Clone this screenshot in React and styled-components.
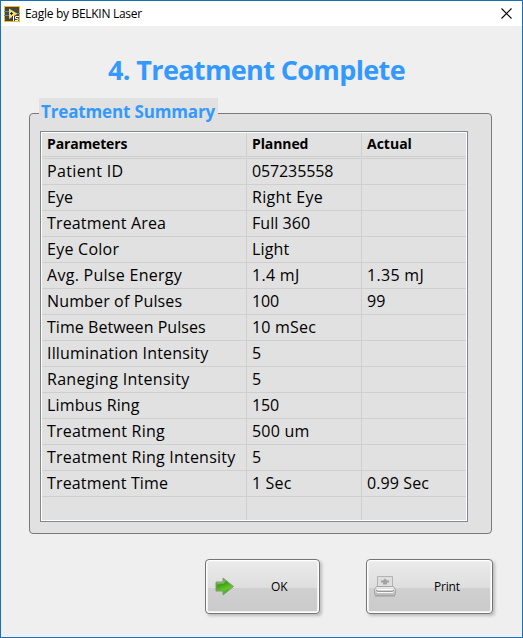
import React from "react";
import styled, { createGlobalStyle } from "styled-components";

const Global = createGlobalStyle`
  * { box-sizing: border-box; }
  body { margin: 0; font-family: "Open Sans", "Noto Sans", sans-serif; color: #000; }
`;

const Window = styled.div`
  width: 523px;
  height: 638px;
  border: 1px solid #1870b8;
  background: #efefef;
  display: flex;
  flex-direction: column;
  overflow: hidden;
`;

const TitleBar = styled.header`
  height: 25px;
  flex: none;
  background: #fff;
  display: flex;
  align-items: center;
  padding: 0 10px 0 3px;
`;

const Caption = styled.span`
  flex: 1;
  margin-left: 5px;
  font-size: 12px;
  line-height: 16px;
  letter-spacing: -0.3px;
  white-space: nowrap;
`;

const Heading = styled.h1`
  flex: none;
  margin: 24px 0 0;
  padding-right: 10px;
  height: 40px;
  line-height: 40px;
  text-align: center;
  font-size: 27px;
  font-weight: 700;
  letter-spacing: -0.64px;
  color: #3399ff;
  white-space: nowrap;
`;

const Group = styled.section`
  flex: none;
  margin: 8px 0 0 28px;
  width: 463px;
  height: 436px;
`;

const GroupTitle = styled.h2`
  position: relative;
  z-index: 1;
  margin: 0 0 0 10px;
  width: 179px;
  height: 24px;
  padding-left: 2px;
  line-height: 28px;
  font-size: 17px;
  font-weight: 700;
  letter-spacing: -0.15px;
  color: #3399ff;
  background: #e1e1e1;
  white-space: nowrap;
`;

const GroupPanel = styled.div`
  margin-top: -9px;
  height: 421px;
  padding: 17px 0 0 10px;
  border: 1px solid #7a7a7c;
  border-radius: 4px;
  background: #e1e1e1;
`;

const Table = styled.div`
  width: 428px;
  height: 391px;
  border: 1px solid #828790;
  outline: 1px solid #fff;
  outline-offset: -2px;
  padding: 1px;
  overflow: hidden;
`;

const Row = styled.div`
  display: grid;
  grid-template-columns: 204px 115px 1fr;
  height: ${(p) => (p.$head ? 24 : 26)}px;
  border-bottom: 1px solid #cfcfcf;
  margin-bottom: ${(p) => (p.$head ? 1 : 0)}px;
  border-top: ${(p) => (p.$first ? "1px solid #cfcfcf" : "0")};
  ${(p) => p.$first && "height: 27px;"}
  ${(p) => p.$last && "height: 24px; border-bottom: 0;"}
`;

const Cell = styled.div`
  padding-left: 5px;
  border-left: ${(p) => (p.$divided ? "1px solid #cfcfcf" : "0")};
  font-size: ${(p) => (p.$head ? 14 : 16)}px;
  line-height: ${(p) => (p.$head ? 22 : 25)}px;
  font-weight: ${(p) => (p.$head ? 700 : 400)};
  letter-spacing: ${(p) => p.$track || 0}px;
  white-space: nowrap;
`;

const Actions = styled.footer`
  display: flex;
  gap: 46px;
  margin: 25px 0 0 204px;
`;

const Button = styled.button`
  width: ${(p) => p.$width}px;
  height: 55px;
  padding: 0 0 0 ${(p) => p.$inset}px;
  display: flex;
  align-items: center;
  border: 1px solid #747474;
  border-radius: 4px;
  background: linear-gradient(#ebebeb 0, #dedede 52%, #d0d0d0 52%, #cacaca 100%);
  box-shadow: inset 0 0 0 1px #fff, inset 0 0 0 2px #f0f0f0, 2px 2px 3px #bdbdbd;
  font: 12px/16px "Open Sans", "Noto Sans", sans-serif;
  color: #000;
`;

const ButtonText = styled.span`
  flex: 1;
  padding-left: ${(p) => p.$indent}px;
  text-align: left;
  letter-spacing: -0.2px;
`;

const AppIcon = () => (
  <svg width="16" height="16" viewBox="0 0 16 16">
    <rect width="16" height="16" fill="#f6b818" />
    <rect x="1" y="1" width="14" height="14" fill="#424549" />
    <path d="M0 5.5h5M0 9.5h5M12 7.5h4" stroke="#438dc5" />
    <path d="M5 2.500v10.500l8.500-5.250z" fill="#f8d76b" />
    <path d="M6 7.500h3M7.500 6v3" stroke="#282828" />
    <path d="M8 10h7v5h-7z" fill="#383b40" />
    <path d="M9.500 10v5M15 10.500h-3.500v2h2.500v2h-3" fill="none" stroke="#fff" />
  </svg>
);

const CloseIcon = () => (
  <svg width="11" height="11" viewBox="0 0 11 11">
    <path d="M.5.5l10 10M10.5.5l-10 10" stroke="#000" strokeWidth="1.1" />
  </svg>
);

const ArrowIcon = () => (
  <svg width="20" height="20" viewBox="0 0 20 20">
    <defs>
      <linearGradient id="arrow" x1="0" y1="0" x2="0.4" y2="1">
        <stop offset="0" stopColor="#8bbd70" />
        <stop offset=".45" stopColor="#45a01c" />
        <stop offset=".75" stopColor="#5fcb24" />
        <stop offset="1" stopColor="#4a9a2b" />
      </linearGradient>
    </defs>
    <path d="M1 5h7V1l10.500 8.500L8 18v-4H1z" fill="url(#arrow)" stroke="#7f9c72" strokeLinejoin="round" />
    <path d="M2 6h7V3" fill="none" stroke="#a5d58a" opacity=".7" />
  </svg>
);

const PrinterIcon = () => (
  <svg width="22" height="24" viewBox="0 0 22 24">
    <defs>
      <linearGradient id="tray" x1="0" y1="0" x2="0" y2="1">
        <stop offset="0" stopColor="#eeeeee" />
        <stop offset="1" stopColor="#b4b4b4" />
      </linearGradient>
    </defs>
    <path d="M1 20h20v2H1z" fill="#a4a4a4" opacity=".6" />
    <path d="M3.500 1.500h15v11h-15z" fill="#dedede" stroke="#b2b2b2" />
    <path d="M11 3.500l2 2h2v2h-2v2H9v-2H7v-2h2z" fill="#a2a2a2" />
    <path d="M2.500 11.500h17l2 3v4q0 2-2 2h-17q-2 0-2-2v-4z" fill="url(#tray)" stroke="#a6a6a6" />
    <path d="M2 15q1 1.500 3 1.500h12q2 0 3-1.500" fill="none" stroke="#969696" />
    <path d="M3 14.500h16M3 17.500h16" stroke="#f7f7f7" />
  </svg>
);

const headings = [
  ["Parameters", -0.15],
  ["Planned", -0.1],
  ["Actual", 0],
];

// Each value is paired with its letter tracking.
const rows = [
  [["Patient ID", 0.36], ["057235558", -0.12], [""]],
  [["Eye", 0.1], ["Right Eye", 0.33], [""]],
  [["Treatment Area", 0.16], ["Full 360", 0.05], [""]],
  [["Eye Color", 0.25], ["Light", 0.15], [""]],
  [["Avg. Pulse Energy", 0.28], ["1.4 mJ", 0.3], ["1.35 mJ", 0.3]],
  [["Number of Pulses", 0.14], ["100", -0.1], ["99", 0]],
  [["Time Between Pulses", 0.04], ["10 mSec", 0.2], [""]],
  [["Illumination Intensity", 0.18], ["5"], [""]],
  [["Raneging Intensity", 0.3], ["5"], [""]],
  [["Limbus Ring", 0.15], ["150", -0.1], [""]],
  [["Treatment Ring", 0.22], ["500 um", 0.2], [""]],
  [["Treatment Ring Intensity", 0.22], ["5"], [""]],
  [["Treatment Time", 0.15], ["1 Sec", 0.15], ["0.99 Sec", 0.1]],
  [[""], [""], [""]],
];

export default function App() {
  return (
    <>
      <Global />
      <Window>
        <TitleBar>
          <AppIcon />
          <Caption>Eagle by BELKIN Laser</Caption>
          <CloseIcon />
        </TitleBar>
        <Heading>4. Treatment Complete</Heading>
        <Group>
          <GroupTitle>Treatment Summary</GroupTitle>
          <GroupPanel>
            <Table>
              <Row $head>
                {headings.map(([label, track], c) => (
                  <Cell key={label} $head $divided={c > 0} $track={track}>{label}</Cell>
                ))}
              </Row>
              {rows.map((row, r) => (
                <Row key={r} $first={r === 0} $last={r === rows.length - 1}>
                  {row.map(([value, track], c) => (
                    <Cell key={c} $divided={c > 0} $track={track}>{value}</Cell>
                  ))}
                </Row>
              ))}
            </Table>
          </GroupPanel>
        </Group>
        <Actions>
          <Button $width={115} $inset={9}>
            <ArrowIcon />
            <ButtonText $indent={36}>OK</ButtonText>
          </Button>
          <Button $width={127} $inset={7}>
            <PrinterIcon />
            <ButtonText $indent={38}>Print</ButtonText>
          </Button>
        </Actions>
      </Window>
    </>
  );
}
